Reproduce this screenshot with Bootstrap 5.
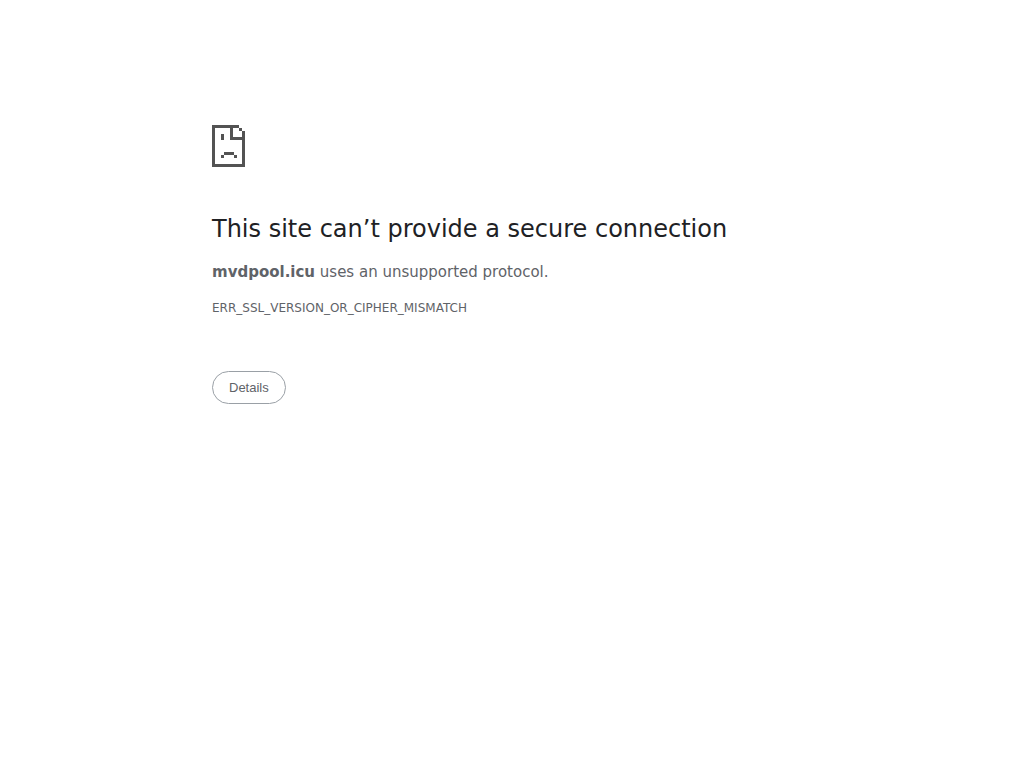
<!DOCTYPE html>
<html lang="en">
<head>
<meta charset="utf-8">
<meta name="viewport" content="width=device-width, initial-scale=1">
<title>mvdpool.icu</title>
<link href="https://cdn.jsdelivr.net/npm/bootstrap@5.3.0/dist/css/bootstrap.min.css" rel="stylesheet">
<style>
  body { background: #fff; color: #5f6368; font-family: "DejaVu Sans", sans-serif; font-size: 15px; line-height: 24px; }
  .error-page { max-width: 600px; padding-top: 125px; }
  .error-icon { width: 33px; height: 42px; margin-bottom: 47px; }
  .error-title { color: #202124; font-size: 24px; line-height: 30px; margin-bottom: 16px; }
  .error-text { margin-bottom: 12px; }
  .error-code { font-size: 12px; margin-bottom: 51px; }
  .btn-details { --bs-btn-color: #5f6368; --bs-btn-border-color: #9aa0a6; --bs-btn-hover-color: #5f6368; --bs-btn-hover-bg: #f8f9fa; --bs-btn-hover-border-color: #9aa0a6;
    font-family: "Liberation Sans", Arial, sans-serif; font-size: 13px; line-height: 15px; padding: 8px 16px; }
</style>
</head>
<body>
<main class="error-page mx-auto">
  <svg class="error-icon d-block" viewBox="0 0 33 42" fill="#535353" shape-rendering="crispEdges" aria-hidden="true">
    <path d="M0 0h27v3h-6v9h9V6h3v36H0zM3 3v36h27V15H18V3z" fill-rule="evenodd"/>
    <path d="M27 3h3v3h-3zM9 9h3v6H9zM12 27h10v3H12zM9 30h3v3H9zM22 30h3v3h-3z"/>
  </svg>
  <h1 class="error-title fw-normal">This site can’t provide a secure connection</h1>
  <p class="error-text"><strong>mvdpool.icu</strong> uses an unsupported protocol.</p>
  <div class="error-code">ERR_SSL_VERSION_OR_CIPHER_MISMATCH</div>
  <button type="button" class="btn btn-details rounded-pill">Details</button>
</main>
<script src="https://cdn.jsdelivr.net/npm/bootstrap@5.3.0/dist/js/bootstrap.bundle.min.js"></script>
</body>
</html>
